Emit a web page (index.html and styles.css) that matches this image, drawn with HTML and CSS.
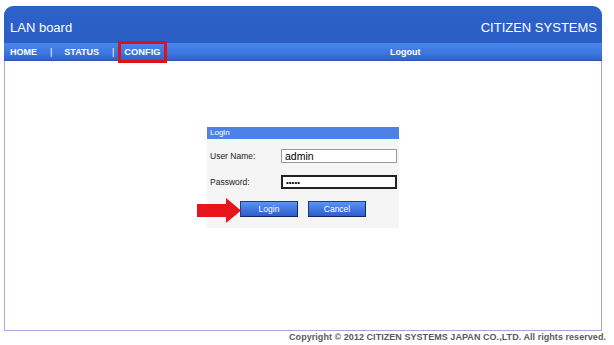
FILE: index.html
```html
<!DOCTYPE html>
<html lang="en">
<head>
    <meta charset="UTF-8">
    <title>LAN board</title>
    <link rel="stylesheet" href="styles.css">
</head>
<body>
    <div class="page">
        <div class="header">
            <span class="title">LAN board</span>
            <span class="brand">CITIZEN SYSTEMS</span>
        </div>
        <div class="nav">
            <div class="nav-left">
                <a href="#" class="nav-item">HOME</a>
                <span class="sep">|</span>
                <a href="#" class="nav-item">STATUS</a>
                <span class="sep">|</span>
                <a href="#" class="nav-item active">CONFIG</a>
            </div>
            <a href="#" class="nav-item logout">Logout</a>
        </div>
        <div class="content">
            <div class="login">
                <div class="login-title">Login</div>
                <form class="login-form">
                    <div class="row">
                        <label for="username">User Name:</label>
                        <input type="text" id="username" value="admin">
                    </div>
                    <div class="row">
                        <label for="password">Password:</label>
                        <input type="password" id="password" class="focus" value="admin">
                    </div>
                    <div class="buttons">
                        <span class="arrow"></span>
                        <input type="submit" class="btn" value="Login">
                        <input type="button" class="btn" value="Cancel">
                    </div>
                </form>
            </div>
        </div>
    </div>
    <p class="copyright">Copyright &copy; 2012 CITIZEN SYSTEMS JAPAN CO.,LTD. All rights reserved.</p>
</body>
</html>
```

FILE: styles.css
```css
body {
    margin: 0;
    font-family: 'Liberation Sans', Arial, sans-serif;
    background-color: #fff;
}

.page {
    width: 598px;
    margin: 6px 0 0 4px;
}

.header {
    height: 37px;
    display: flex;
    justify-content: space-between;
    align-items: center;
    padding: 5px 6px 0 6px;
    box-sizing: border-box;
    background: linear-gradient(#2d62c9, #2a5ec6);
    border-radius: 9px 9px 0 0;
    color: #fff;
}

.title {
    font-size: 13px;
}

.brand {
    font-size: 13px;
    margin-right: -1px;
}

.nav {
    height: 18px;
    display: flex;
    align-items: center;
    background: linear-gradient(#4a86ec, #3c76e0 60%, #2f63c8);
    border-bottom: 1px solid #2a55b0;
    box-sizing: border-box;
    font-size: 9px;
    font-weight: bold;
    color: #fff;
}

.nav-left {
    display: flex;
    align-items: center;
    width: 386px;
}

.nav-item {
    color: #fff;
    text-decoration: none;
}

.nav-left .nav-item:first-child {
    margin-left: 6px;
}

.sep {
    font-weight: normal;
    margin: 0 12px 0 13px;
}

.active {
    outline: 3px solid #e0101a;
    outline-offset: 3px;
    margin-left: -2px;
    font-size: 9.3px;
}

.logout {
    font-size: 9px;
}

.content {
    height: 270px;
    box-sizing: border-box;
    border: 1px solid #a6a6dc;
    border-top: none;
    padding-top: 66px;
    display: flex;
    justify-content: center;
    align-items: flex-start;
}

.login {
    width: 192px;
    height: 101px;
    background-color: #f5f5f5;
    color: #222;
}

.login-title {
    height: 12px;
    line-height: 12px;
    padding-left: 3px;
    background: #4c82e6;
    color: #fff;
    font-size: 8px;
}

.login-form {
    margin: 0;
    padding-top: 10px;
}

.row {
    display: flex;
    align-items: center;
    height: 14px;
    margin-bottom: 12px;
}

.row label {
    width: 71px;
    padding-left: 3px;
    font-size: 8.5px;
}

.row input {
    width: 116px;
    height: 14px;
    box-sizing: border-box;
    border: 1px solid #9a9a9a;
    padding: 0 3px;
    font-family: 'Liberation Sans', Arial, sans-serif;
    font-size: 10.5px;
    background: #fff;
}

.row input.focus {
    border: 2px solid #222;
    font-size: 8px;
}

.buttons {
    position: relative;
    display: flex;
    gap: 10px;
    margin-top: 4px;
    padding-left: 33px;
}

.btn {
    width: 58px;
    height: 16px;
    padding: 0;
    border: 1px solid #1b3c86;
    border-right-color: #0e2a66;
    border-bottom-color: #0e2a66;
    background: linear-gradient(#5d95f4, #3f74de 55%, #2f5fc9);
    color: #fff;
    font-family: 'Liberation Sans', Arial, sans-serif;
    font-size: 8.5px;
}

.arrow {
    position: absolute;
    left: -10px;
    top: -3px;
    width: 44px;
    height: 25px;
    background: #e8141c;
    clip-path: polygon(0 24%, 66% 24%, 66% 0, 100% 50%, 66% 100%, 66% 76%, 0 76%);
}

.copyright {
    width: 606px;
    margin: 1px 0 0 0;
    text-align: right;
    font-size: 9px;
    font-weight: bold;
    letter-spacing: 0.05px;
    color: #5a5a5a;
}
```
